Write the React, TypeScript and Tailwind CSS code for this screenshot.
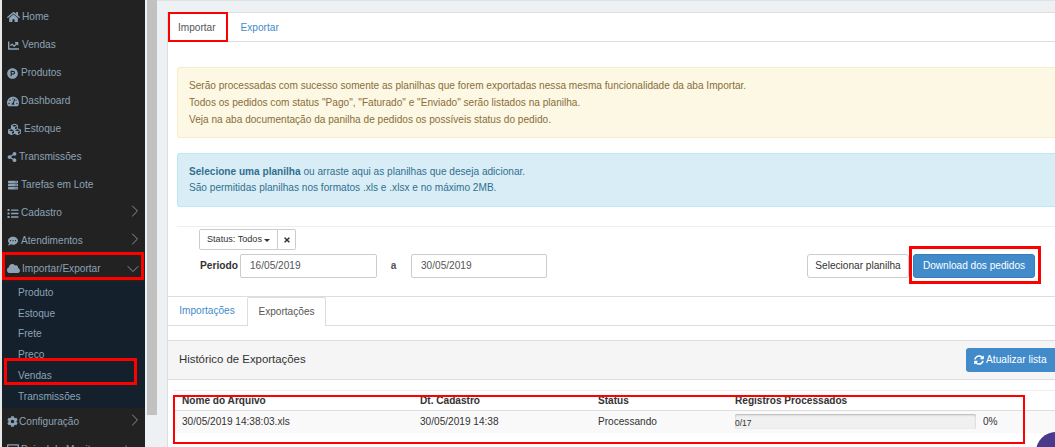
import { FaCloud, FaCog, FaCommentDots, FaCubes, FaHome, FaList, FaProductHunt, FaServer, FaShareAlt, FaSyncAlt, FaTachometerAlt, FaTimes } from 'react-icons/fa'
import { FaChartLine, FaDesktop } from 'react-icons/fa'
import { ChevronDown, ChevronRight } from 'lucide-react'
import type { ComponentType } from 'react'

type NavItem = {
  label: string
  icon: ComponentType<{ className?: string }>
  iconClass: string
  arrow?: boolean
}

const topItems: NavItem[] = [
  { label: 'Home', icon: FaHome, iconClass: 'w-[13px] h-[12px] mr-[2px]' },
  { label: 'Vendas', icon: FaChartLine, iconClass: 'w-[13px] h-[11px] mr-[2px]' },
  { label: 'Produtos', icon: FaProductHunt, iconClass: 'w-[11px] h-[11px] mr-[3px]' },
  { label: 'Dashboard', icon: FaTachometerAlt, iconClass: 'w-[12px] h-[11px] mr-[2px]' },
  { label: 'Estoque', icon: FaCubes, iconClass: 'w-[15px] h-[13px] mr-[2px]' },
  { label: 'Transmissões', icon: FaShareAlt, iconClass: 'w-[10px] h-[10px] mr-[2px]' },
  { label: 'Tarefas em Lote', icon: FaServer, iconClass: 'w-[12px] h-[10px] mr-[2px]' },
  { label: 'Cadastro', icon: FaList, iconClass: 'w-[12px] h-[11px] mr-[2px]', arrow: true },
  { label: 'Atendimentos', icon: FaCommentDots, iconClass: 'w-[12px] h-[10px] mr-[2px]', arrow: true },
]

const subItems = ['Produto', 'Estoque', 'Frete', 'Preço', 'Vendas', 'Transmissões']

function NavRow({ item }: { item: NavItem }) {
  const Icon = item.icon
  return (
    <div className="flex h-[28px] shrink-0 items-center pl-[5px] text-[#8ca3b6]">
      <Icon className={`${item.iconClass} shrink-0`} />
      <span className="flex-1 whitespace-nowrap">{item.label}</span>
      {item.arrow && <ChevronRight className="h-[20px] w-[20px] -translate-y-[2px] text-[#8a929a]" strokeWidth={1.2} />}
    </div>
  )
}

function Sidebar() {
  return (
    <aside className="flex h-full w-[145px] shrink-0 flex-col overflow-hidden border-l-2 border-[#e8e8e8] bg-[#222222] pt-[3px] text-[10.1px]">
      {topItems.map((item) => (
        <NavRow key={item.label} item={item} />
      ))}
      <div className="flex h-[27px] shrink-0 items-center pl-[5px] pr-[2px] text-[#8ca3b6]">
        <FaCloud className="mr-[2px] h-[11px] w-[13px] shrink-0" />
        <span className="flex-1">Importar/Exportar</span>
        <ChevronDown className="h-[20px] w-[20px] text-[#8a929a]" strokeWidth={1.2} />
      </div>
      <div className="flex shrink-0 flex-col bg-[#14202b] pb-[1px] pl-[16px] text-[#8ca3b6]">
        {subItems.map((label) => (
          <div key={label} className="flex h-[20.8px] items-center">
            {label}
          </div>
        ))}
      </div>
      <NavRow item={{ label: 'Configuração', icon: FaCog, iconClass: 'w-[11px] h-[11px] mr-[1px]', arrow: true }} />
      <NavRow item={{ label: 'Painel de Monitoramento', icon: FaDesktop, iconClass: 'w-[12px] h-[11px] mr-[2px]' }} />
    </aside>
  )
}

function Tabs() {
  return (
    <div className="flex h-[29px] shrink-0 items-center border-b border-[#dddddd] pl-[10px] pt-[1px] text-[10.1px]">
      <span className="text-[#555555]">Importar</span>
      <span className="ml-[25px] text-[#428bca]">Exportar</span>
    </div>
  )
}

function Alerts() {
  return (
    <div className="flex flex-col pl-[9px] text-[10.1px]">
      <div className="mt-[25px] flex h-[71px] flex-col justify-center rounded-l-[3px] border border-r-0 border-[#faebcc] bg-[#fcf8e3] pl-[11px] leading-[17px] text-[#8a6d3b]">
        <p>Serão processadas com sucesso somente as planilhas que forem exportadas nessa mesma funcionalidade da aba Importar.</p>
        <p>Todos os pedidos com status "Pago", "Faturado" e "Enviado" serão listados na planilha.</p>
        <p>Veja na aba documentação da panilha de pedidos os possíveis status do pedido.</p>
      </div>
      <div className="mt-[15px] flex h-[54px] flex-col justify-center rounded-l-[3px] border border-r-0 border-[#bce8f1] bg-[#d9edf7] pl-[11px] leading-[16.5px] text-[#31708f]">
        <p>
          <b>Selecione uma planilha</b> ou arraste aqui as planilhas que deseja adicionar.
        </p>
        <p>São permitidas planilhas nos formatos .xls e .xlsx e no máximo 2MB.</p>
      </div>
    </div>
  )
}

function Filters() {
  return (
    <div className="flex flex-col">
      <div className="ml-[9px] mt-[19px] border-t border-[#eeeeee]" />
      <div className="ml-[31px] mt-[2px] flex h-[21px] text-[#333333]">
        <div className="flex w-[79px] items-center justify-center gap-[2px] rounded-l-[2px] border border-[#cccccc] text-[9.1px]">
          Status: Todos
          <span className="mt-[1px] border-x-[3px] border-t-[3px] border-x-transparent border-t-[#333333]" />
        </div>
        <div className="flex w-[18px] items-center justify-center rounded-r-[2px] border border-l-0 border-[#cccccc]">
          <FaTimes className="h-[8px] w-[8px]" />
        </div>
      </div>
      <div className="mt-[4px] flex h-[24px] items-center text-[10.1px]">
        <span className="ml-[32px] w-[40px] text-[10.2px] font-bold text-[#333333]">Periodo</span>
        <div className="flex h-full w-[137px] items-center rounded-[2px] border border-[#cccccc] pl-[9px] text-[#555555]">16/05/2019</div>
        <span className="w-[33px] text-center font-bold text-[#555555]">a</span>
        <div className="ml-[1px] flex h-full w-[136px] items-center rounded-[2px] border border-[#cccccc] pl-[9px] text-[#555555]">30/05/2019</div>
        <div className="ml-auto mr-[20px] flex h-full items-center">
          <div className="flex h-full w-[102px] items-center justify-center rounded-[3px] border border-[#cccccc] text-[#333333]">Selecionar planilha</div>
          <div className="ml-[4px] flex h-full w-[122px] items-center justify-center rounded-[3px] border border-[#357ebd] bg-[#428bca] text-white">Download dos pedidos</div>
        </div>
      </div>
    </div>
  )
}

function ExportHistory() {
  return (
    <div className="mt-[18px] flex flex-1 flex-col border-t border-[#dddddd] text-[10.1px]">
      <div className="flex h-[29px] shrink-0 items-end border-b border-[#dddddd]">
        <span className="flex h-full w-[78px] items-center justify-center text-[#428bca]">Importações</span>
        <span className="-mb-px ml-[1px] flex h-[29px] w-[79px] items-center justify-center rounded-t-[2px] border border-b-0 border-[#dddddd] bg-white text-[#555555]">Exportações</span>
      </div>
      <div className="mt-[14px] flex h-[40px] shrink-0 items-center justify-between border-y border-[#dddddd] bg-[#f5f5f5] pl-[11px]">
        <span className="text-[11.4px] text-[#333333]">Histórico de Exportações</span>
        <div className="flex h-[24px] w-[89px] items-center gap-[2px] rounded-l-[3px] bg-[#428bca] pl-[8px] text-[10.2px] text-white">
          <FaSyncAlt className="h-[10px] w-[10px]" />
          Atualizar lista
        </div>
      </div>
      <div className="ml-[5px] mt-[10px] border-t border-[#eeeeee]">
        <div className="grid h-[20px] grid-cols-[238px_178px_137px_1fr] items-center border-b border-[#dddddd] pl-[9px] font-bold text-[#333333]">
          <span>Nome do Arquivo</span>
          <span>Dt. Cadastro</span>
          <span>Status</span>
          <span>Registros Processados</span>
        </div>
        <div className="grid h-[22px] grid-cols-[238px_178px_137px_1fr] items-center bg-[#f9f9f9] pl-[9px] text-[#333333]">
          <span>30/05/2019 14:38:03.xls</span>
          <span>30/05/2019 14:38</span>
          <span>Processando</span>
          <div className="flex items-center">
            <div className="flex h-[15px] w-[241px] items-end rounded-[2px] bg-[#f0f0f0] text-[8.5px] shadow-[inset_0_1px_2px_rgba(0,0,0,0.25)]">0/17</div>
            <span className="ml-[7px]">0%</span>
          </div>
        </div>
      </div>
    </div>
  )
}

function Annotations() {
  return (
    <>
      <div className="pointer-events-none absolute left-[168px] top-[12px] h-[30px] w-[60px] border-[2px] border-[#ff0000]" />
      <div className="pointer-events-none absolute left-[2px] top-[252px] h-[28px] w-[142px] border-[3px] border-[#ff0000]" />
      <div className="pointer-events-none absolute left-[4px] top-[358px] h-[27px] w-[133px] border-[3px] border-[#ff0000]" />
      <div className="pointer-events-none absolute left-[909px] top-[246px] h-[38px] w-[132px] border-[3px] border-[#ff0000]" />
      <div className="pointer-events-none absolute left-[173px] top-[395px] h-[49px] w-[852px] border-[2px] border-[#ff0000]" />
    </>
  )
}

export default function App() {
  return (
    <div className="relative flex h-[447px] w-[1055px] overflow-hidden bg-[#eef1f3] font-['Liberation_Sans',Arial,sans-serif]">
      <Sidebar />
      <div className="ml-[2px] h-[415px] w-[10px] shrink-0 bg-[#c1c1c1]" />
      <div className="flex min-w-0 flex-1 flex-col border-t border-[#dfe3e5]">
        <main className="ml-[10px] mt-[11px] flex min-w-0 flex-1 flex-col border-l border-t border-[#dddddd] bg-white">
          <Tabs />
          <Alerts />
          <Filters />
          <ExportHistory />
        </main>
      </div>
      <Annotations />
      <div className="absolute left-[1036px] top-[432px] h-[40px] w-[40px] rounded-full bg-[#4a3a8c]" />
    </div>
  )
}
